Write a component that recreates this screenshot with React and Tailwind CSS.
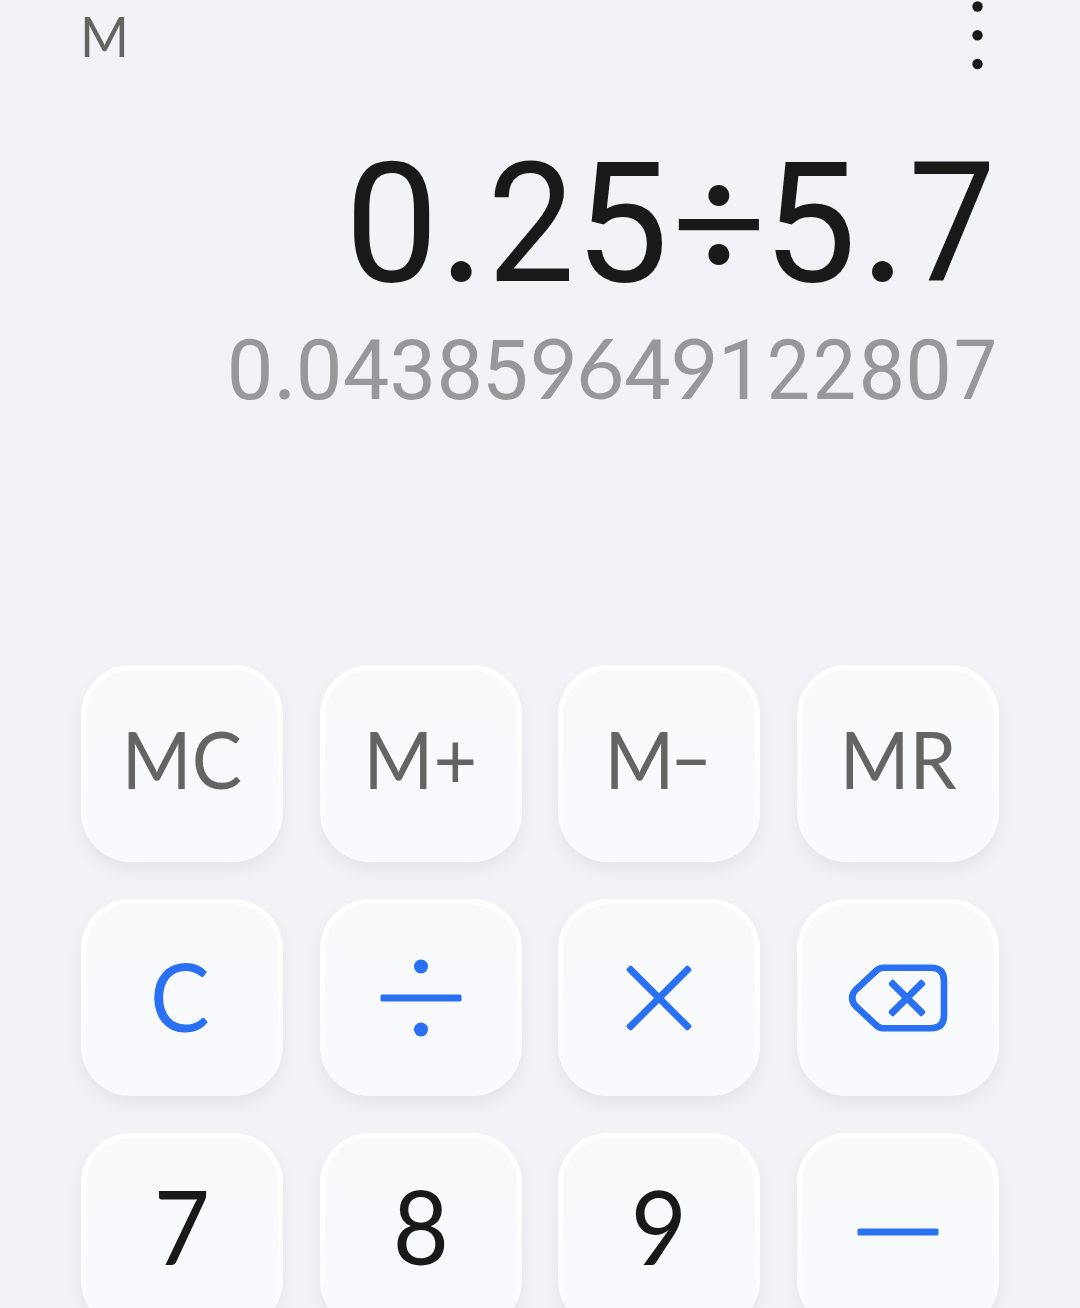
import clsx from 'clsx'

const ink = {
  memory: "font-['Lato',sans-serif] text-[80px] text-[#646464] pb-[16px]",
  clear: "font-['Lato',sans-serif] text-[95px] text-[#2970f2] pb-[9px] pr-[4px]",
  digit: "font-['Lato',sans-serif] text-[103px] text-[#191919] pb-[18px]",
  icon: 'text-[#2970f2] pb-[4px]',
}

const DivideIcon = () => (
  <svg width="82" height="78" viewBox="0 0 82 78" fill="currentColor">
    <circle cx="41" cy="7.5" r="7" />
    <rect x="0.5" y="35.5" width="81" height="7" rx="1.5" />
    <circle cx="41" cy="70.5" r="7" />
  </svg>
)

const TimesIcon = () => (
  <svg width="66" height="66" viewBox="0 0 66 66" fill="currentColor">
    <rect x="-10.5" y="29.5" width="87" height="7" rx="2" transform="rotate(45 33 33)" />
    <rect x="-10.5" y="29.5" width="87" height="7" rx="2" transform="rotate(-45 33 33)" />
  </svg>
)

const BackspaceIcon = () => (
  <svg width="100" height="68" viewBox="0 0 100 68" fill="none" stroke="currentColor" strokeWidth="6.6">
    <path d="M35.5 3.8H83Q96 3.8 96 16.8V51.2Q96 64.2 83 64.2H35.5Q31.5 64.2 28.5 61.5L7.5 42Q0.8 34 7.5 26L28.5 6.5Q31.5 3.8 35.5 3.8Z" />
    <g fill="currentColor" stroke="none">
      <rect x="35.5" y="30.5" width="47" height="7" rx="1.8" transform="rotate(45 59 34)" />
      <rect x="35.5" y="30.5" width="47" height="7" rx="1.8" transform="rotate(-45 59 34)" />
    </g>
  </svg>
)

const MinusIcon = () => (
  <svg width="82" height="8" viewBox="0 0 82 8" fill="currentColor">
    <rect x="0.5" y="0.5" width="81" height="7" rx="1.5" />
  </svg>
)

const keys = [
  { id: 'mc', label: 'MC', kind: 'memory' },
  { id: 'm+', label: 'M+', kind: 'memory' },
  { id: 'm-', label: <>M<span className="-ml-[5px] inline-block scale-x-[0.9]">−</span></>, kind: 'memory' },
  { id: 'mr', label: 'MR', kind: 'memory' },
  { id: 'clear', label: 'C', kind: 'clear' },
  { id: 'divide', label: <DivideIcon />, kind: 'icon' },
  { id: 'times', label: <TimesIcon />, kind: 'icon' },
  { id: 'back', label: <BackspaceIcon />, kind: 'icon' },
  { id: '7', label: '7', kind: 'digit' },
  { id: '8', label: '8', kind: 'digit' },
  { id: '9', label: '9', kind: 'digit' },
  { id: 'minus', label: <MinusIcon />, kind: 'icon' },
]

function Key({ label, kind }) {
  return (
    <button className="h-[197px] rounded-[50px] bg-linear-to-b from-white from-40% to-[#f9fafd] to-90% p-[5px] pb-0 shadow-[0_8px_16px_rgba(0,0,0,0.06)]">
      <span className={clsx('flex h-full items-center justify-center rounded-[46px] bg-linear-to-b from-[#f8f9fb] to-[#f9fafd] leading-none', ink[kind])}>
        <span className={clsx(kind !== 'icon' && 'scale-x-[0.94]')}>{label}</span>
      </span>
    </button>
  )
}

// Lato has the round point and the straight-tailed 6 and 9
function Readout({ value, className }) {
  return (
    <div className={clsx("flex items-baseline justify-end font-['Roboto',sans-serif] leading-none", className)}>
      {value.split('').map((ch, i) => (
        <span
          key={i}
          className={clsx(
            'flex justify-center',
            ch === '.' && "w-[0.267em] font-['Lato',sans-serif]",
            ch === '÷' && "w-[0.56em] font-['Lato',sans-serif]",
            /[69]/.test(ch) && "w-[0.565em] font-['Lato',sans-serif]",
            /[0-578]/.test(ch) && 'w-[0.565em]',
            ch === '5' && 'pr-[0.04em]',
            /[27]/.test(ch) && 'scale-x-[0.93]'
          )}
        >
          {ch}
        </span>
      ))}
    </div>
  )
}

export default function App() {
  return (
    <div className="h-[1308px] w-[1080px] overflow-hidden bg-[#f1f3f7] px-[81px]">
      <header className="flex h-[72px] items-start justify-between pr-[16px]">
        <span className="-ml-px origin-left scale-x-[0.94] pt-[6px] font-['Lato',sans-serif] text-[56px] leading-[60px] text-[#646464]">M</span>
        <button className="text-[#191919]">
          <svg width="11" height="72" viewBox="0 0 11 72" fill="currentColor">
            <circle cx="5.5" cy="6.5" r="5.2" />
            <circle cx="5.5" cy="35.3" r="5.2" />
            <circle cx="5.5" cy="64" r="5.2" />
          </svg>
        </button>
      </header>

      <main className="h-[593px] pt-[61px]">
        <Readout value="0.25÷5.7" className="h-[193px] text-[167px] text-[#191919]" />
        <Readout value="0.043859649122807" className="text-[83px] text-[#979899]" />
      </main>

      <div className="grid grid-cols-4 gap-x-[36.67px] gap-y-[37px]">
        {keys.map(k => <Key key={k.id} label={k.label} kind={k.kind} />)}
      </div>
    </div>
  )
}
